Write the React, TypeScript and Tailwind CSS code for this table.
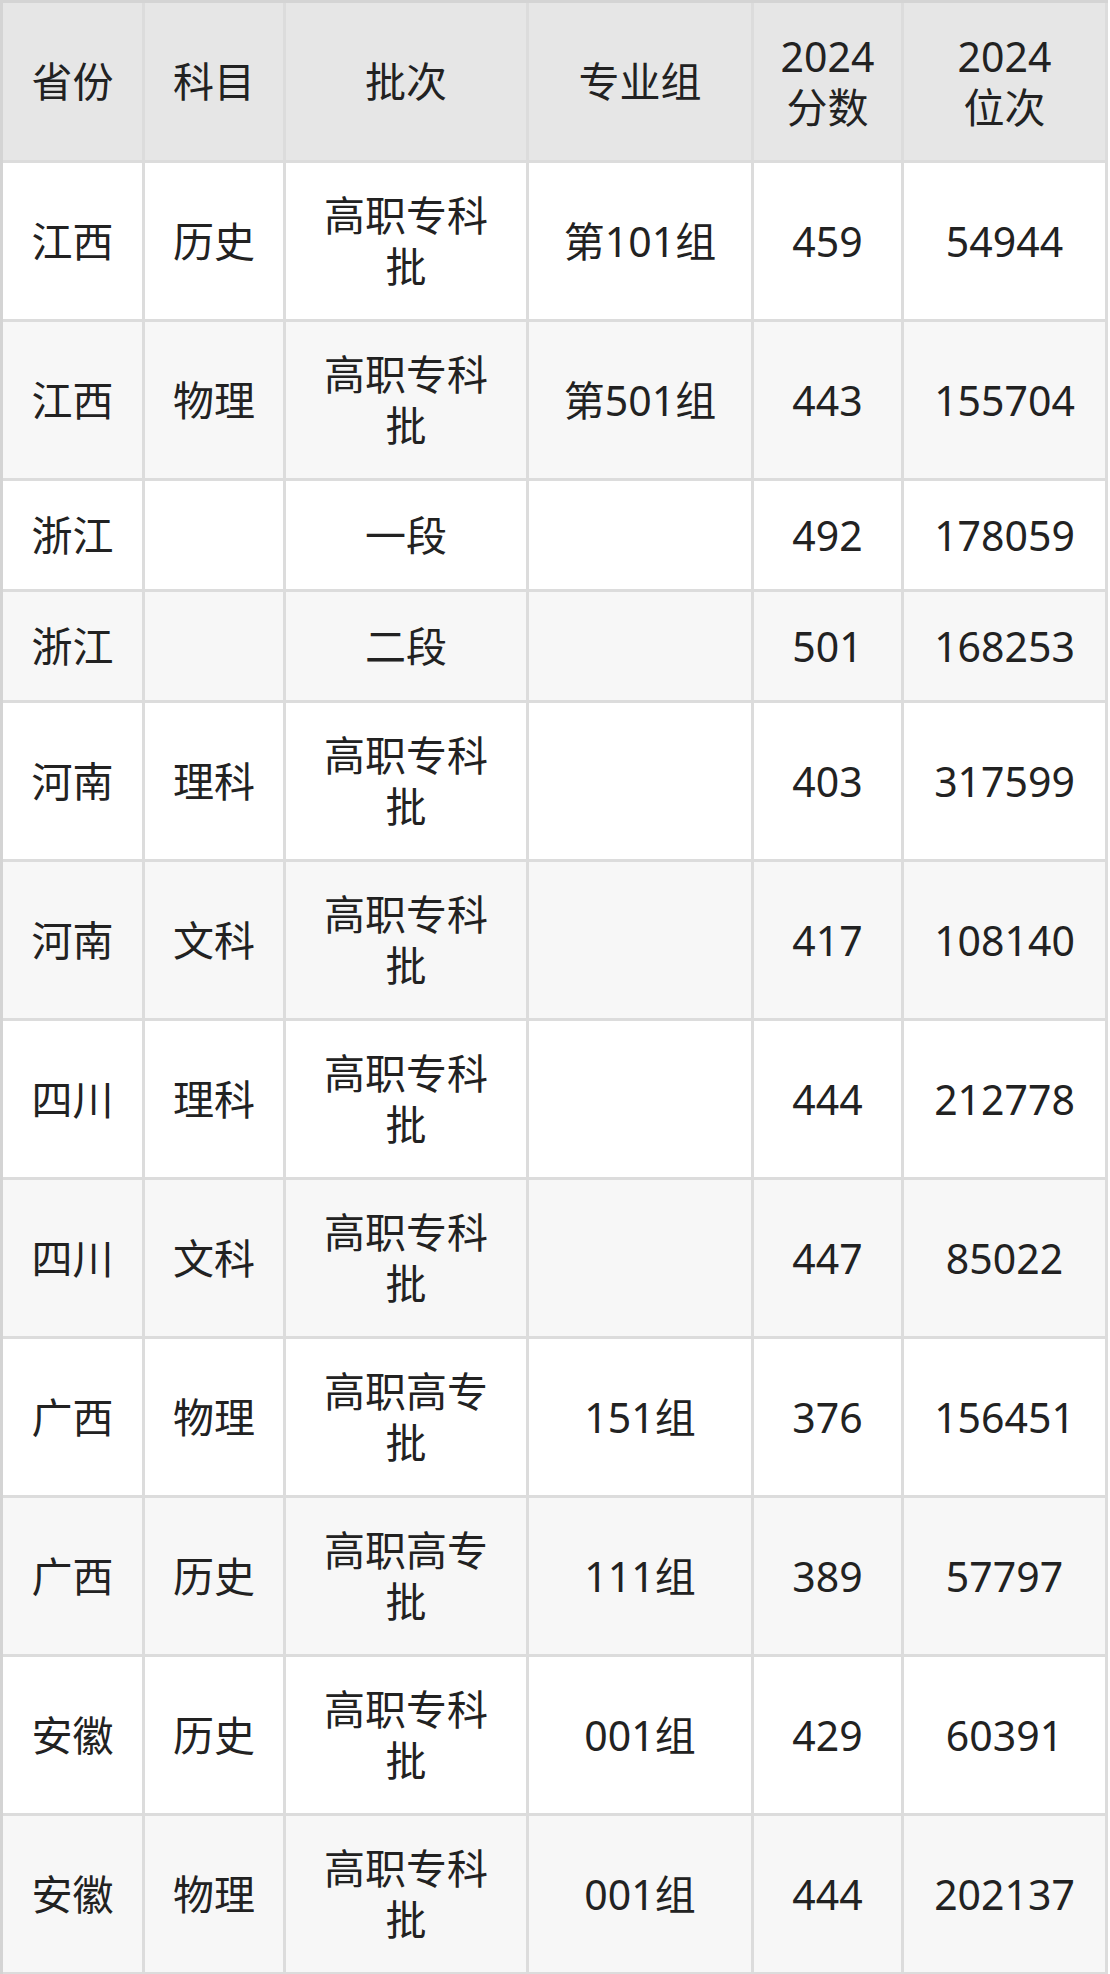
const head = ["省份", "科目", "批次", "专业组", "2024\n分数", "2024\n位次"];

const rows = [
  ["江西", "历史", "高职专科\n批", "第101组", "459", "54944"],
  ["江西", "物理", "高职专科\n批", "第501组", "443", "155704"],
  ["浙江", "", "一段", "", "492", "178059"],
  ["浙江", "", "二段", "", "501", "168253"],
  ["河南", "理科", "高职专科\n批", "", "403", "317599"],
  ["河南", "文科", "高职专科\n批", "", "417", "108140"],
  ["四川", "理科", "高职专科\n批", "", "444", "212778"],
  ["四川", "文科", "高职专科\n批", "", "447", "85022"],
  ["广西", "物理", "高职高专\n批", "151组", "376", "156451"],
  ["广西", "历史", "高职高专\n批", "111组", "389", "57797"],
  ["安徽", "历史", "高职专科\n批", "001组", "429", "60391"],
  ["安徽", "物理", "高职专科\n批", "001组", "444", "202137"],
];

function Cell({ text }: { text: string }) {
  return (
    <div className="flex items-center justify-center border-r-[3px] border-b-[3px] border-[#dcdcdc] text-center whitespace-pre-line">
      {text}
    </div>
  );
}

export default function App() {
  return (
    <div className="min-h-screen w-[1110px] bg-white font-['Noto_Sans','Noto_Sans_CJK_SC',sans-serif] text-[41px] leading-[51px] text-[#222]">
      <div className="w-[1108px] border-t-[3px] border-l-[3px] border-[#d4d4d4]">
        <div className="grid h-[160px] grid-cols-[142px_141px_243px_225px_150px_204px] bg-[#e6e6e6]">
          {head.map((h) => (
            <Cell key={h} text={h} />
          ))}
        </div>
        {rows.map((r, i) => {
          const short = r[2].indexOf("\n") < 0;
          return (
            <div
              key={i}
              className={`grid grid-cols-[142px_141px_243px_225px_150px_204px] ${short ? "h-[111px]" : "h-[159px]"} ${i % 2 === 1 ? "bg-[#f7f7f7]" : "bg-white"}`}
            >
              {r.map((c, j) => (
                <Cell key={j} text={c} />
              ))}
            </div>
          );
        })}
      </div>
    </div>
  );
}
